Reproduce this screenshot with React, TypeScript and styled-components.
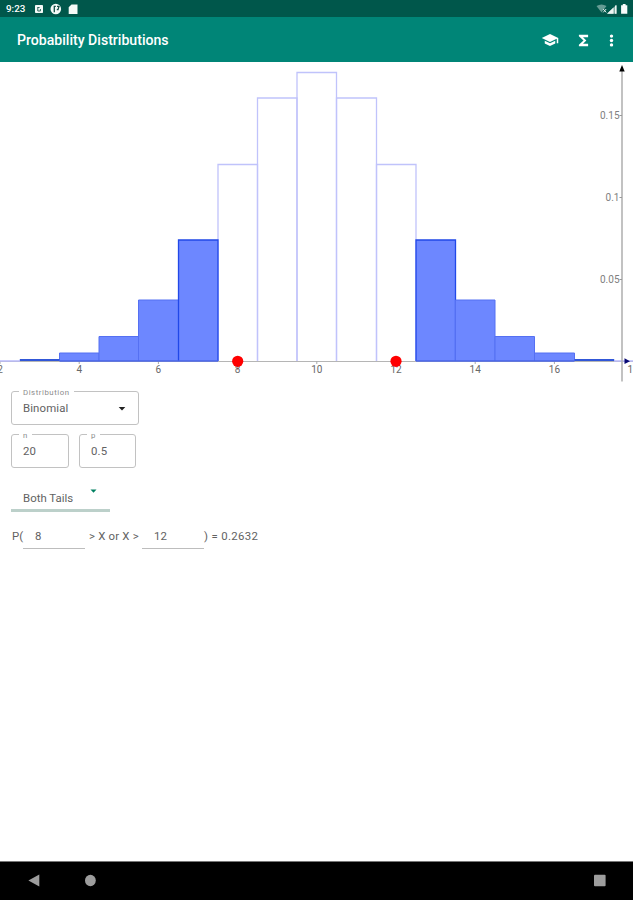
import React from "react";
import styled, { createGlobalStyle } from "styled-components";

const GlobalStyle = createGlobalStyle`
  * { box-sizing: border-box; }
  body {
    margin: 0;
    background: #fff;
    font-family: Roboto, "Liberation Sans", sans-serif;
    color: #626262;
  }
`;

const Screen = styled.div`
  width: 633px;
  height: 900px;
  display: flex;
  flex-direction: column;
  overflow: hidden;
`;

const StatusBar = styled.header`
  height: 17px;
  flex: none;
  display: flex;
  align-items: center;
  justify-content: space-between;
  padding: 1px 4px 0 6px;
  background: #00574b;
  color: #fff;
`;

const StatusGroup = styled.div`
  display: flex;
  align-items: center;
`;

const Clock = styled.span`
  width: 20px;
  font-size: 9.8px;
  line-height: 12px;
  font-weight: 500;
  white-space: nowrap;
  margin-right: 8px;
`;

const AppBar = styled.div`
  height: 45px;
  flex: none;
  display: flex;
  align-items: center;
  padding: 1px 9px 0 17px;
  background: #008577;
  color: #fff;
`;

const Title = styled.h1`
  margin: 0;
  flex: 1;
  font-size: 14.1px;
  line-height: 18px;
  font-weight: 500;
`;

const Actions = styled.div`
  display: flex;
  align-items: center;
`;

const Action = styled.button<{ $width: number }>`
  width: ${(p) => p.$width}px;
  height: 24px;
  padding: 0;
  border: 0;
  background: none;
  color: inherit;
  display: flex;
  justify-content: center;
  align-items: center;
`;

const Chart = styled.svg`
  display: block;
  flex: none;
  width: 633px;
  height: 322px;
  font-family: Roboto, "Liberation Sans", sans-serif;
  font-size: 10px;
`;

const Form = styled.main`
  flex: 1;
  padding: 7px 11px 0;
  font-size: 11.4px;
`;

const FieldRow = styled.div`
  display: flex;
  gap: 10px;
  margin-bottom: 9px;
`;

const Field = styled.div<{ $width: number }>`
  position: relative;
  width: ${(p) => p.$width}px;
  height: 34px;
  padding: 0 12px 0 11px;
  display: flex;
  align-items: center;
  justify-content: space-between;
  border: 1px solid #c2c2c2;
  border-radius: 3px;
  letter-spacing: 0.12px;
`;

const FieldLabel = styled.label`
  position: absolute;
  left: 7px;
  top: -4px;
  padding: 0 4px;
  background: #fff;
  color: #8c8c8c;
  font-size: 7.8px;
  line-height: 9px;
  letter-spacing: 0.55px;
`;

const TailSelect = styled.div`
  width: 99px;
  height: 27px;
  margin-top: 17px;
  padding: 5px 13px 0 12px;
  display: flex;
  justify-content: space-between;
  align-items: flex-start;
  line-height: 16px;
  letter-spacing: 0.03px;
  border-bottom: 3px solid #bcd0ca;
`;

const TailArrow = styled.svg`
  flex: none;
  display: block;
  margin-top: -1px;
`;

const Equation = styled.div`
  display: flex;
  align-items: flex-start;
  height: 24px;
  margin-top: 13px;
  padding-left: 1px;
  line-height: 22px;
  white-space: nowrap;
`;

const EqText = styled.span<{ $width: number; $indent?: number; $spacing?: number }>`
  width: ${(p) => p.$width}px;
  padding-left: ${(p) => p.$indent ?? 0}px;
  letter-spacing: ${(p) => p.$spacing ?? 0}px;
`;

const EqInput = styled.span`
  width: 62px;
  height: 24px;
  padding-left: 12px;
  border-bottom: 1px solid #bdbdbd;
`;

const NavBar = styled.nav`
  height: 39px;
  flex: none;
  display: flex;
  align-items: center;
  justify-content: space-between;
  padding: 0 27px 1px 28px;
  background: #000;
  border-top: 1px solid #777;
`;

const NavGroup = styled.div`
  display: flex;
  gap: 45px;
`;

const BAR = 39.6;
const BASE = 299;
const TOPS: Record<number, number> = {
  3: 297.5, 4: 291, 5: 274.5, 6: 238, 7: 178, 8: 102.5, 9: 36, 10: 10.5,
  11: 36, 12: 102.5, 13: 178, 14: 238, 15: 274.5, 16: 291, 17: 297.5,
};
const xOf = (n: number) => 316.8 + (n - 10) * BAR;
const edge = (n: number) => Math.round((xOf(n) + 0.1) * 2) / 2;
const ks = Object.keys(TOPS).map(Number);
const isTail = (k: number) => k < 8 || k > 12;

function Histogram() {
  return (
    <Chart viewBox="0 0 633 322">
      <path d="M0 299.5H633" stroke="#b5b5b5" />
      {[2, 4, 6, 8, 10, 12, 14, 16].map((n) => (
        <g key={n}>
          <path d={`M${xOf(n)} 299v3`} stroke="#aaa" />
          <text x={n === 2 ? 0 : xOf(n)} y="311" textAnchor="middle" fill="#686868">{n}</text>
        </g>
      ))}
      <text x="627.5" y="311" fill="#686868">18</text>
      {ks.filter((k) => !isTail(k)).map((k) => {
        const l = edge(k - 0.5);
        const r = edge(k + 0.5);
        return <path key={k} d={`M${l} ${BASE}V${TOPS[k]}H${r}V${BASE}`} fill="none" stroke="#c0c3fb" strokeWidth="1.3" />;
      })}
      {ks.filter(isTail).map((k) => {
        const l = edge(k - 0.5);
        const r = edge(k + 0.5);
        const strong = k === 7 || k === 13;
        return (
          <g key={k}>
            <rect x={l} y={TOPS[k]} width={r - l} height={BASE - TOPS[k]} fill="#6d87ff" />
            <path d={`M${l} ${BASE}V${TOPS[k]}H${r}V${BASE}`} fill="none" stroke={strong ? "#2148e8" : "#5570f2"} strokeWidth={strong ? 1.3 : 1} />
          </g>
        );
      })}
      <path d={`M${edge(2.5)} 298H${edge(3.5)}M${edge(16.5)} 298H${edge(17.5)}`} stroke="#3157d8" strokeWidth="2" />
      <path d={`M${edge(3.5)} 299H${edge(7.5)}M${edge(12.5)} 299H${edge(16.5)}`} stroke="#4965e6" strokeWidth="1.5" />
      <path d={`M0 299H${edge(2.5)}M${edge(17.5)} 299H633`} stroke="#b9bbfa" strokeWidth="1.5" />
      <path d="M622 5V319.5" stroke="#b3b3b3" strokeWidth="1.6" />
      <path d="M622 3L624.7 9.5H619.3Z" fill="#000" />
      <path d="M630 299.2L624.5 296.3V302.1Z" fill="#080873" />
      {([[53.5, "0.15"], [135.5, "0.1"], [217.5, "0.05"]] as [number, string][]).map(([y, label]) => (
        <g key={label}>
          <path d={`M619.5 ${y}H622`} stroke="#999" />
          <text x="619.5" y={y + 3.5} textAnchor="end" fill="#808080">{label}</text>
        </g>
      ))}
      <circle cx={237.7} cy="299.3" r="5.6" fill="#f00" />
      <circle cx={396} cy="299.3" r="5.6" fill="#f00" />
      <path d="M237.6 303v5" stroke="#852a2a" strokeOpacity=".4" />
    </Chart>
  );
}

export default function App() {
  return (
    <Screen>
      <GlobalStyle />
      <StatusBar>
        <StatusGroup>
          <Clock>9:23</Clock>
          <svg width="44" height="12" viewBox="0 0 44 12">
            <rect x="1" y="2" width="8" height="8" rx="0.8" fill="#f4faf8" />
            <path d="M3.8 4v4h2.6V6M3.8 4.5h1.8" fill="none" stroke="#31665e" />
            <circle cx="21.8" cy="6" r="5.3" fill="#f4faf8" />
            <path d="M20.3 9.2V3.4h1.5M23 3.4h2l-1 3.2h-1.2" fill="none" stroke="#164f47" strokeWidth="1.3" />
            <path d="M37.5 1.5h6V11h-8.8V4.3Z" fill="#f4faf8" />
          </svg>
        </StatusGroup>
        <svg width="33" height="12" viewBox="0 0 33 12">
          <path d="M.5 3Q5.5-.1 10.5 3L5.5 9.6Z" fill="#669c94" />
          <path d="M7.2 6l3 3.4M10.2 6l-3 3.4" stroke="#e4efed" />
          <path d="M11 10.7L20.5 1.8v8.9Z" fill="#86aea7" />
          <path d="M11 10.7L17.5 4.6v6.1ZM19 2.5h1.5v8.2H19Z" fill="#edf5f3" />
          <path d="M26.8 1h2.8v1.2h1.7v8.6h-6.2V2.2h1.7Z" fill="#f8fcfb" />
        </svg>
      </StatusBar>
      <AppBar>
        <Title>Probability Distributions</Title>
        <Actions>
          <Action $width={34} aria-label="Learn">
            <svg width="18" height="16" viewBox="0 0 24 24" preserveAspectRatio="none" fill="currentColor">
              <path d="M5 13.2v4L12 21l7-3.8v-4L12 17ZM12 3L1 9l11 6 9-4.9V17h2V9Z" />
            </svg>
          </Action>
          <Action $width={32} aria-label="Formulas">
            <svg width="17" height="17" viewBox="0 0 24 24" fill="currentColor">
              <path d="M18.5 4H5.5v2l6.5 6-6.5 6v2h13v-3.3h-7.2L16 12l-4.7-4.7h7.2Z" />
            </svg>
          </Action>
          <Action $width={25} aria-label="More options">
            <svg width="17" height="17" viewBox="0 0 24 24" fill="currentColor">
              <circle cx="12" cy="5.8" r="2.4" />
              <circle cx="12" cy="12" r="2.4" />
              <circle cx="12" cy="18.2" r="2.4" />
            </svg>
          </Action>
        </Actions>
      </AppBar>
      <Histogram />
      <Form>
        <FieldRow>
          <Field $width={128}>
            <FieldLabel>Distribution</FieldLabel>
            Binomial
            <svg width="8" height="5" viewBox="0 0 8 5"><path d="M.7 1h6.6L4 4.5Z" fill="#222" /></svg>
          </Field>
        </FieldRow>
        <FieldRow>
          <Field $width={58}><FieldLabel>n</FieldLabel>20</Field>
          <Field $width={57}><FieldLabel>p</FieldLabel>0.5</Field>
        </FieldRow>
        <TailSelect>
          Both Tails
          <TailArrow width="7" height="4" viewBox="0 0 7 4"><path d="M.5 .5h6L3.5 3.7Z" fill="#008061" /></TailArrow>
        </TailSelect>
        <Equation>
          <EqText $width={11}>P(</EqText>
          <EqInput>8</EqInput>
          <EqText $width={57} $indent={4} $spacing={0.2}>&gt; X or X &gt;</EqText>
          <EqInput>12</EqInput>
          <EqText $width={60} $indent={0} $spacing={0.33}>) = 0.2632</EqText>
        </Equation>
      </Form>
      <NavBar>
        <NavGroup>
          <svg width="12" height="13" viewBox="0 0 12 13"><path d="M.4 6.5L11.3.5v12Z" fill="#9d9d9d" /></svg>
          <svg width="12" height="13" viewBox="0 0 12 13"><ellipse cx="5.4" cy="6.5" rx="5.4" ry="5.7" fill="#9d9d9d" /></svg>
        </NavGroup>
        <svg width="12" height="13" viewBox="0 0 12 13"><rect x="0" y="0.7" width="11.6" height="11.6" rx="1" fill="#9d9d9d" /></svg>
      </NavBar>
    </Screen>
  );
}
